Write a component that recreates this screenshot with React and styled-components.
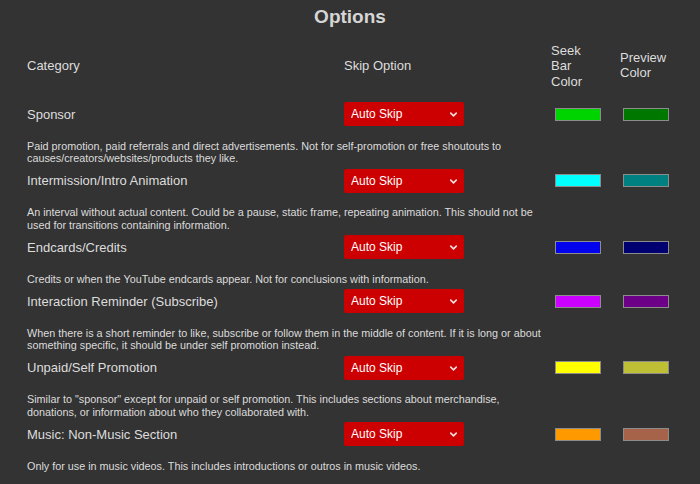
import React from 'react';
import styled, {createGlobalStyle} from 'styled-components';
import {ChevronDown} from 'lucide-react';

const GlobalStyle = createGlobalStyle`
  html, body {
    margin: 0;
    padding: 0;
    background: #333333;
  }
  body {
    font-family: "Liberation Sans", Arial, sans-serif;
    color: #dddddd;
  }
`;

const Page = styled.div`
  width: 700px;
  height: 484px;
  overflow: hidden;
  background: #333333;
`;

const Title = styled.h1`
  margin: 0;
  padding-top: 6px;
  height: 22px;
  line-height: 22px;
  text-align: center;
  font-size: 19px;
  font-weight: bold;
  color: #d6d6d6;
`;

const Table = styled.div`
  display: grid;
  grid-template-columns: 317px 207px 69px 1fr;
  padding-left: 27px;
  margin-top: 14px;
`;

const HeadCell = styled.div`
  display: flex;
  align-items: center;
  height: 48px;
  font-size: 13px;
  line-height: 15.5px;
  margin-bottom: 8px;
  transform: translateY(${p => p.$shift || 0}px);
`;

const NameCell = styled.div`
  display: flex;
  align-items: center;
  height: 32px;
  font-size: 13px;
`;

const Description = styled.div`
  grid-column: 1 / -1;
  max-width: 518px;
  padding-top: 9.5px;
  font-size: 10.8px;
  line-height: 12.5px;
  color: #dcdcdc;
`;

const SelectWrap = styled.div`
  position: relative;
  width: 120px;
  height: 24px;
`;

const Select = styled.select`
  appearance: none;
  width: 120px;
  height: 24px;
  border: none;
  border-radius: 2px;
  background: #cc0000;
  color: #ffffff;
  font-family: "Liberation Sans", Arial, sans-serif;
  font-size: 12px;
  padding: 0 0 0 7px;
  outline: none;
`;

const Chevron = styled(ChevronDown)`
  position: absolute;
  right: 5px;
  top: 7px;
  pointer-events: none;
  color: #f2dede;
`;

const Swatch = styled.div`
  box-sizing: border-box;
  width: 46px;
  height: 13px;
  margin-left: ${p => p.$offset}px;
  border: 1px solid #8c8c8c;
  background: ${p => p.$color};
`;

const categories = [
  {
    name: 'Sponsor',
    desc: 'Paid promotion, paid referrals and direct advertisements. Not for self-promotion or free shoutouts to causes/creators/websites/products they like.',
    bar: '#00d400',
    preview: '#007800',
  },
  {
    name: 'Intermission/Intro Animation',
    desc: 'An interval without actual content. Could be a pause, static frame, repeating animation. This should not be used for transitions containing information.',
    bar: '#00ffff',
    preview: '#008080',
  },
  {
    name: 'Endcards/Credits',
    desc: 'Credits or when the YouTube endcards appear. Not for conclusions with information.',
    bar: '#0202ed',
    preview: '#000070',
  },
  {
    name: 'Interaction Reminder (Subscribe)',
    desc: 'When there is a short reminder to like, subscribe or follow them in the middle of content. If it is long or about something specific, it should be under self promotion instead.',
    bar: '#cc00ff',
    preview: '#6c0087',
  },
  {
    name: 'Unpaid/Self Promotion',
    desc: 'Similar to "sponsor" except for unpaid or self promotion. This includes sections about merchandise, donations, or information about who they collaborated with.',
    bar: '#ffff00',
    preview: '#bfbf35',
  },
  {
    name: 'Music: Non-Music Section',
    desc: 'Only for use in music videos. This includes introductions or outros in music videos.',
    bar: '#ff9900',
    preview: '#a6634a',
  },
];

const App = function () {
  return (
    <Page>
      <GlobalStyle />
      <Title>Options</Title>
      <Table>
        <HeadCell>Category</HeadCell>
        <HeadCell>Skip Option</HeadCell>
        <HeadCell>
          Seek
          <br />
          Bar
          <br />
          Color
        </HeadCell>
        <HeadCell $shift={-1}>
          Preview
          <br />
          Color
        </HeadCell>
        {categories.map(cat => (
          <React.Fragment key={cat.name}>
            <NameCell>{cat.name}</NameCell>
            <NameCell>
              <SelectWrap>
                <Select defaultValue="auto">
                  <option value="auto">Auto Skip</option>
                  <option value="manual">Manual Skip</option>
                  <option value="show">Show In Seek Bar</option>
                  <option value="off">Disable</option>
                </Select>
                <Chevron size={11} strokeWidth={3.5} />
              </SelectWrap>
            </NameCell>
            <NameCell>
              <Swatch $color={cat.bar} $offset={4} />
            </NameCell>
            <NameCell>
              <Swatch $color={cat.preview} $offset={3} />
            </NameCell>
            <Description>{cat.desc}</Description>
          </React.Fragment>
        ))}
      </Table>
    </Page>
  );
};

export default App;
